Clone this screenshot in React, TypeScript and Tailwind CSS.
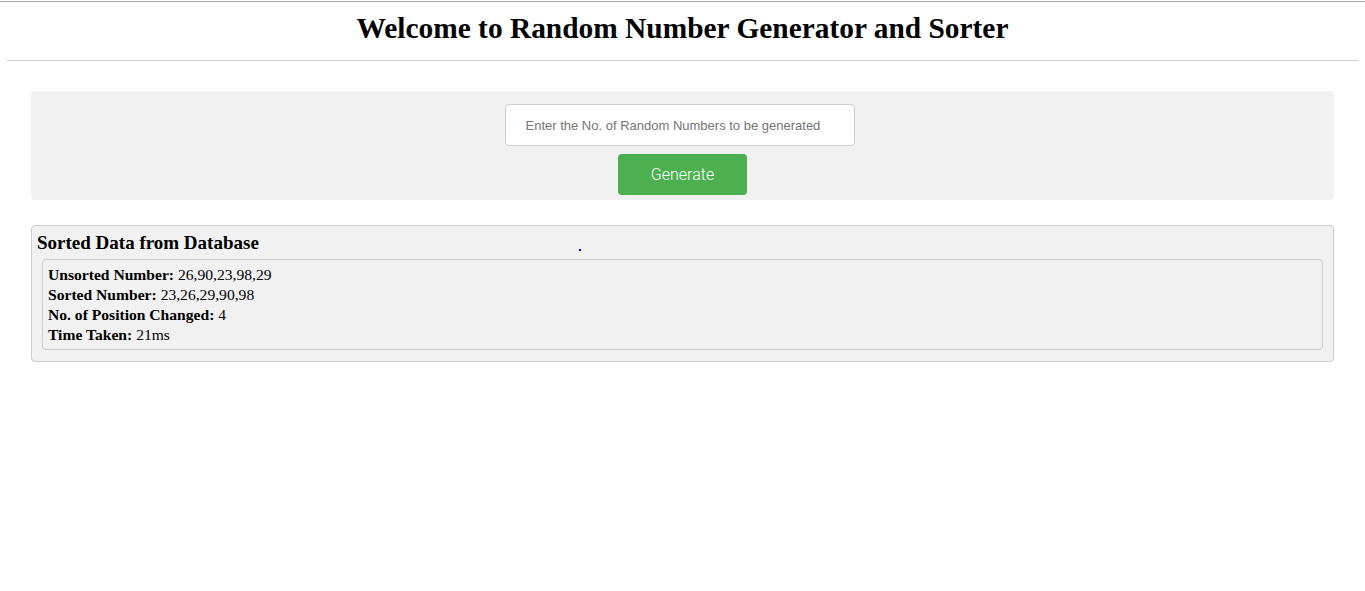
import React, { useState } from 'react';

const serif = "font-['Liberation_Serif','Times_New_Roman',serif]";
const sans = "font-['Liberation_Sans',Arial,sans-serif]";

const App: React.FC = () => {
  const [count, setCount] = useState('');

  const result = {
    unsorted: '26,90,23,98,29',
    sorted: '23,26,29,90,98',
    changed: 4,
    time: '21ms',
  };

  return (
    <div className={`min-h-[591px] bg-white text-black ${serif}`}>
      <div className="mt-px border-t border-[#a9a9a9]" />
      <h1 className="pt-[9px] text-center text-[29.4px] font-bold leading-[34px]">
        Welcome to Random Number Generator and Sorter
      </h1>
      <hr className="mx-[7px] mt-[15px] border-t border-[#cfcfcf]" />

      <div className="mx-[31px] mt-[30px] flex flex-col items-center rounded bg-[#f1f1f1] pb-[5px] pt-[13px]">
        <input
          type="text"
          value={count}
          onChange={(e) => setCount(e.target.value)}
          placeholder="Enter the No. of Random Numbers to be generated"
          className={`mr-[6px] h-[42px] w-[350px] rounded border border-[#cccccc] bg-white px-5 text-[13px] text-[#555] placeholder:text-[#757575] focus:outline-none ${sans}`}
        />
        <button
          type="button"
          className="mt-2 h-[41px] w-[129px] rounded bg-[#4caf50] font-['Roboto','Liberation_Sans',sans-serif] text-[16px] font-light text-white"
        >
          Generate
        </button>
      </div>

      <div className="relative mx-[31px] mt-[25px] rounded border border-[#cccccc] bg-[#f1f1f1] px-[5px] pb-[11px] pt-[6px]">
        <span className="absolute left-[547px] top-[23px] h-[2px] w-[2px] bg-[#0000ff]" />
        <h3 className="text-[19px] font-bold leading-[21px]">Sorted Data from Database</h3>
        <div className="mx-[5px] mt-[6px] rounded border border-[#cccccc] px-[5px] pb-[4px] pt-[5px] text-[15.6px] leading-[20px]">
          <div>
            <b>Unsorted Number:</b> {result.unsorted}
          </div>
          <div>
            <b>Sorted Number:</b> {result.sorted}
          </div>
          <div>
            <b>No. of Position Changed:</b> {result.changed}
          </div>
          <div>
            <b>Time Taken:</b> {result.time}
          </div>
        </div>
      </div>
    </div>
  );
};

export default App;
